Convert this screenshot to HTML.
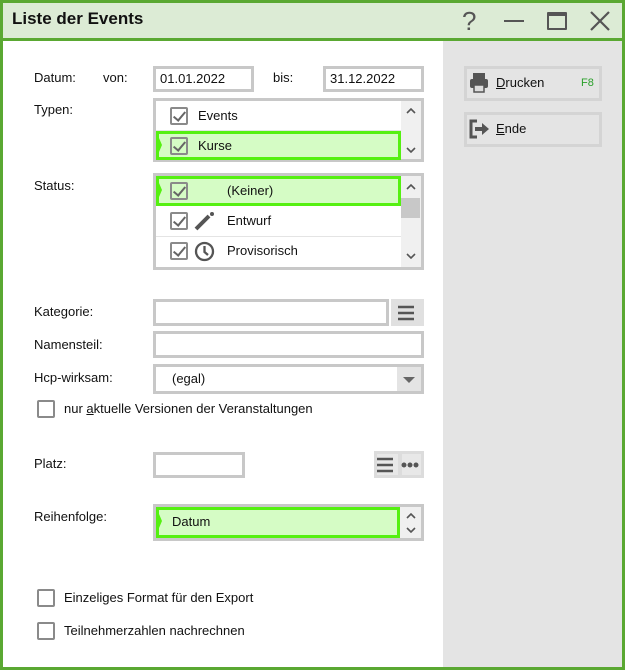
<!DOCTYPE html>
<html><head><meta charset="utf-8"><style>
*{margin:0;padding:0;box-sizing:border-box}
body{width:625px;height:670px;position:relative;background:#fff;font-family:"Liberation Sans","DejaVu Sans",sans-serif;font-size:13px;color:#111;overflow:hidden}
.a{position:absolute}
.box{position:absolute;border:3px solid #c8c8c8;background:#fff}
.lbl{position:absolute;font-size:13px}
.cb{position:absolute;width:18px;height:18px;border:2px solid #8a8a8a;background:#fff;border-radius:2px}
.cb.on::after{content:"";position:absolute;left:4px;top:0px;width:5px;height:10px;border:solid #666;border-width:0 2px 2px 0;transform:rotate(40deg)}
.sel{position:absolute;border:3px solid #55f011;background:#d5fcc5}
.sel::before{content:"";position:absolute;left:-3px;top:-3px;border-left:6px solid #55f011;border-top:14px solid transparent;border-bottom:14px solid transparent}
.sb{position:absolute;background:#f0f0f0}
.btn{position:absolute;border:3px solid #d4d4d4;background:#e4e4e4}
u{text-decoration:underline}
</style></head><body>
<svg width="0" height="0" style="position:absolute"><defs>
<symbol id="up" viewBox="0 0 10 6"><path d="M1 5L5 1L9 5" fill="none" stroke="#555" stroke-width="1.6"/></symbol>
<symbol id="dn" viewBox="0 0 10 6"><path d="M1 1L5 5L9 1" fill="none" stroke="#555" stroke-width="1.6"/></symbol>
</defs></svg>
<!-- frame -->
<div class="a" style="left:0;top:0;width:625px;height:41px;background:#dcebd5;border:3px solid #5aa832"></div>
<div class="a" style="left:0;top:0;width:3px;height:670px;background:#5aa832"></div>
<div class="a" style="left:622px;top:0;width:3px;height:670px;background:#5aa832"></div>
<div class="a" style="left:0;top:667px;width:625px;height:3px;background:#5aa832"></div>
<div class="a" style="left:12px;top:9px;font-size:17px;font-weight:bold;color:#111">Liste der Events</div>
<div class="a" style="left:462px;top:6px;font-size:26px;color:#555">?</div>
<div class="a" style="left:504px;top:20px;width:20px;height:2px;background:#555"></div>
<div class="a" style="left:547px;top:12px;width:20px;height:18px;border:2px solid #555;border-top-width:4px;border-radius:1px"></div>
<svg class="a" style="left:589px;top:11px" width="22" height="20"><path d="M2 1L20 19M20 1L2 19" stroke="#555" stroke-width="2.2"/></svg>
<!-- right panel -->
<div class="a" style="left:443px;top:41px;width:179px;height:626px;background:#e4e4e4"></div>
<div class="btn" style="left:464px;top:66px;width:138px;height:35px"></div>
<svg class="a" style="left:469px;top:72px" width="20" height="22"><rect x="4" y="1" width="12" height="6" fill="#555"/><rect x="1" y="7" width="18" height="9" rx="2" fill="#555"/><rect x="5" y="13" width="10" height="7" fill="#ddd" stroke="#555" stroke-width="1.5"/></svg>
<div class="lbl" style="left:496px;top:75px"><u>D</u>rucken</div>
<div class="lbl" style="left:581px;top:77px;color:#2aa02a;font-size:11px">F8</div>
<div class="btn" style="left:464px;top:112px;width:138px;height:35px"></div>
<svg class="a" style="left:469px;top:119px" width="22" height="20"><path d="M8 2H2V18H8" fill="none" stroke="#555" stroke-width="3"/><path d="M6 10H14" stroke="#555" stroke-width="4"/><path d="M13 4L20 10L13 16Z" fill="#555"/></svg>
<div class="lbl" style="left:496px;top:121px"><u>E</u>nde</div>
<!-- left form -->
<div class="lbl" style="left:34px;top:70px">Datum:</div>
<div class="lbl" style="left:103px;top:70px">von:</div>
<div class="box" style="left:153px;top:66px;width:101px;height:26px"></div>
<div class="lbl" style="left:160px;top:71px">01.01.2022</div>
<div class="lbl" style="left:273px;top:70px">bis:</div>
<div class="box" style="left:323px;top:66px;width:101px;height:26px"></div>
<div class="lbl" style="left:330px;top:71px">31.12.2022</div>

<div class="lbl" style="left:34px;top:102px">Typen:</div>
<div class="box" style="left:153px;top:98px;width:271px;height:64px"></div>
<div class="sb" style="left:401px;top:101px;width:20px;height:58px"></div>
<svg class="a" style="left:406px;top:108px" width="10" height="6"><use href="#up"/></svg>
<svg class="a" style="left:406px;top:147px" width="10" height="6"><use href="#dn"/></svg>
<div class="a" style="left:156px;top:130px;width:245px;height:1px;background:#e4e4e4"></div>
<div class="cb on" style="left:170px;top:107px"></div>
<div class="lbl" style="left:198px;top:108px">Events</div>
<div class="sel" style="left:156px;top:131px;width:245px;height:29px"></div>
<div class="cb on" style="left:170px;top:137px;background:transparent"></div>
<div class="lbl" style="left:198px;top:138px">Kurse</div>

<div class="lbl" style="left:34px;top:178px">Status:</div>
<div class="box" style="left:153px;top:173px;width:271px;height:97px"></div>
<div class="sb" style="left:401px;top:176px;width:20px;height:91px"></div>
<div class="a" style="left:401px;top:198px;width:19px;height:20px;background:#c8c8c8"></div>
<svg class="a" style="left:406px;top:184px" width="10" height="6"><use href="#up"/></svg>
<svg class="a" style="left:406px;top:253px" width="10" height="6"><use href="#dn"/></svg>
<div class="sel" style="left:156px;top:176px;width:245px;height:30px"></div>
<div class="cb on" style="left:170px;top:182px;background:transparent"></div>
<div class="lbl" style="left:227px;top:183px">(Keiner)</div>
<div class="a" style="left:156px;top:236px;width:245px;height:1px;background:#e4e4e4"></div>
<div class="cb on" style="left:170px;top:212px"></div>
<svg class="a" style="left:194px;top:211px" width="22" height="20"><path d="M2 18L15 5" stroke="#555" stroke-width="4"/><circle cx="18" cy="3" r="2" fill="#555"/></svg>
<div class="lbl" style="left:227px;top:213px">Entwurf</div>
<div class="cb on" style="left:170px;top:242px"></div>
<svg class="a" style="left:194px;top:241px" width="22" height="22"><circle cx="10.5" cy="10.5" r="8.5" fill="none" stroke="#555" stroke-width="2.3"/><path d="M10.5 5V11L14 14" fill="none" stroke="#555" stroke-width="2.3"/></svg>
<div class="lbl" style="left:227px;top:243px">Provisorisch</div>

<div class="lbl" style="left:34px;top:304px">Kategorie:</div>
<div class="box" style="left:153px;top:299px;width:236px;height:27px"></div>
<div class="a" style="left:391px;top:299px;width:33px;height:27px;background:#e0e0e0"></div>
<svg class="a" style="left:397px;top:305px" width="20" height="16"><path d="M1 2H17M1 8H17M1 14H17" stroke="#555" stroke-width="2.4"/></svg>
<div class="lbl" style="left:34px;top:337px">Namensteil:</div>
<div class="box" style="left:153px;top:331px;width:271px;height:27px"></div>
<div class="lbl" style="left:34px;top:370px">Hcp-wirksam:</div>
<div class="box" style="left:153px;top:364px;width:271px;height:30px"></div>
<div class="a" style="left:397px;top:367px;width:24px;height:24px;background:#e4e4e4"></div>
<div class="a" style="left:403px;top:377px;border-left:6px solid transparent;border-right:6px solid transparent;border-top:6px solid #666"></div>
<div class="lbl" style="left:172px;top:371px">(egal)</div>
<div class="cb" style="left:37px;top:400px"></div>
<div class="lbl" style="left:64px;top:401px">nur <u>a</u>ktuelle Versionen der Veranstaltungen</div>

<div class="lbl" style="left:34px;top:456px">Platz:</div>
<div class="box" style="left:153px;top:452px;width:92px;height:26px"></div>
<div class="a" style="left:374px;top:451px;width:50px;height:27px;background:#dcdcdc"></div>
<div class="a" style="left:377px;top:454px;width:21px;height:21px;background:#e8e8e8"></div>
<div class="a" style="left:402px;top:454px;width:19px;height:21px;background:#e8e8e8"></div>
<svg class="a" style="left:376px;top:457px" width="20" height="16"><path d="M1 2H17M1 8H17M1 14H17" stroke="#555" stroke-width="2.4"/></svg>
<svg class="a" style="left:399px;top:460px" width="24" height="10"><circle cx="5" cy="5" r="2.5" fill="#555"/><circle cx="11" cy="5" r="2.5" fill="#555"/><circle cx="17" cy="5" r="2.5" fill="#555"/></svg>

<div class="lbl" style="left:34px;top:509px">Reihenfolge:</div>
<div class="box" style="left:153px;top:504px;width:271px;height:37px"></div>
<div class="sel" style="left:156px;top:507px;width:244px;height:31px"></div>
<div class="sb" style="left:400px;top:507px;width:21px;height:31px"></div>
<svg class="a" style="left:406px;top:513px" width="10" height="6"><use href="#up"/></svg>
<svg class="a" style="left:406px;top:527px" width="10" height="6"><use href="#dn"/></svg>
<div class="lbl" style="left:172px;top:514px">Datum</div>

<div class="cb" style="left:37px;top:589px"></div>
<div class="lbl" style="left:64px;top:590px">Einzeliges Format für den Export</div>
<div class="cb" style="left:37px;top:622px"></div>
<div class="lbl" style="left:64px;top:623px">Teilnehmerzahlen nachrechnen</div>
</body></html>
